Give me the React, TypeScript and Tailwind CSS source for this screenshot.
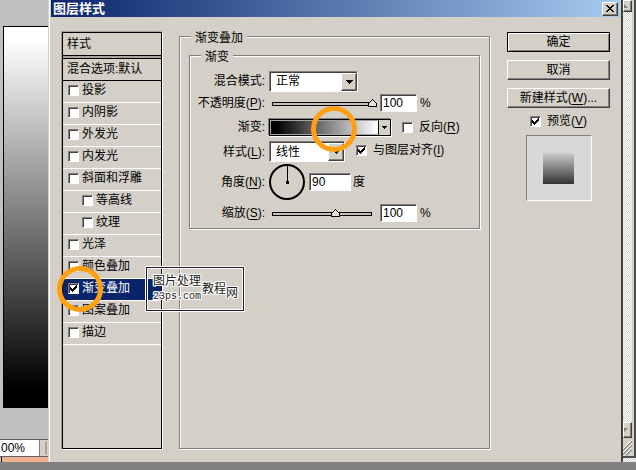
import { useState, type ReactNode } from "react";

const sunken =
  "border border-t-[#808080] border-l-[#808080] border-r-white border-b-white shadow-[inset_1px_1px_0_#404040]";
const raised =
  "border border-t-white border-l-white border-r-[#404040] border-b-[#404040] shadow-[inset_-1px_-1px_0_#808080]";
const etched = "border border-[#808080] shadow-[1px_1px_0_#fff,inset_1px_1px_0_#fff]";

function Key({ children }: { children: string }) {
  return (
    <>
      (<u className="underline-offset-2">{children}</u>)
    </>
  );
}

function Tick({ id, checked = false }: { id: string; checked?: boolean }) {
  return (
    <span className="relative block size-[11px] shrink-0">
      <input
        id={id}
        type="checkbox"
        defaultChecked={checked}
        className={`peer block size-[11px] appearance-none bg-white ${sunken}`}
      />
      <svg
        viewBox="0 0 11 11"
        className="pointer-events-none absolute inset-0 hidden size-[11px] peer-checked:block"
        shapeRendering="crispEdges"
      >
        <path d="M2 4h1v1h1v1h1v-1h1v-1h1v-1h1v-1h1v3h-1v1h-1v1h-1v1h-1v1h-1v-1h-1v-1h-1z" fill="#000" />
      </svg>
    </span>
  );
}

function DropDown({ id, value, options, width }: { id: string; value: string; options: string[]; width: string }) {
  return (
    <span className={`relative block h-[21px] ${width}`}>
      <select
        id={id}
        defaultValue={value}
        className={`block h-full w-full appearance-none bg-white pl-[6px] leading-4 ${sunken}`}
      >
        {options.map((o) => (
          <option key={o}>{o}</option>
        ))}
      </select>
      <span
        className={`pointer-events-none absolute top-[2px] right-[1px] bottom-[1px] flex w-4 items-center justify-center bg-[#d4d0c8] ${raised}`}
      >
        <svg viewBox="0 0 7 4" className="h-1 w-[7px]" shapeRendering="crispEdges">
          <path d="M0 0h7v1h-1v1h-1v1h-1v1h-1v-1h-1v-1h-1v-1h-1z" />
        </svg>
      </span>
    </span>
  );
}

function Percent({ id, label, initial, max }: { id: string; label: string; initial: number; max: number }) {
  const [value, setValue] = useState(initial);
  const x = Math.round((Math.min(value, max) / max) * 100);
  return (
    <>
      <span className="relative block h-3 w-[111px]">
        <svg viewBox="0 0 111 12" className="block h-3 w-[111px]" shapeRendering="crispEdges">
          <rect x="3" y="5" width="100" height="4" fill="#000" />
          <rect x="4" y="6" width="98" height="2" fill="#c4c0b8" />
          <g transform={`translate(${x - 1} 0)`}>
            <path d="M0 10v-4h1v-1h1v-1h1v-1h1v-1h1v1h1v1h1v1h1v1h1v4z" fill="#000" />
            <path d="M1 9v-3h1v-1h1v-1h1v-1h1v1h1v1h1v1h1v3z" fill="#e4e0d8" />
          </g>
        </svg>
        <input
          type="range"
          aria-label={label}
          min={0}
          max={max}
          value={value}
          onChange={(e) => setValue(Number(e.target.value))}
          className="absolute inset-0 w-full opacity-0"
        />
      </span>
      <input
        id={id}
        value={value}
        onChange={(e) => setValue(Number(e.target.value) || 0)}
        className={`h-[18px] w-[37px] bg-white pl-[2px] ${sunken}`}
      />
      <span className="ml-[3px]">%</span>
    </>
  );
}

function Row({ id, label, height, children }: { id: string; label: ReactNode; height: string; children: ReactNode }) {
  return (
    <div className={`flex items-center ${height}`}>
      <label htmlFor={id} className="mr-1 w-[75px] shrink-0 text-right">
        {label}:
      </label>
      {children}
    </div>
  );
}

function Ring({ place }: { place: string }) {
  return (
    <span className={`pointer-events-none absolute z-10 size-[46px] rounded-full border-[5px] border-[#ffa012] ${place}`} />
  );
}

const effects = [
  { name: "投影" },
  { name: "内阴影" },
  { name: "外发光" },
  { name: "内发光" },
  { name: "斜面和浮雕" },
  { name: "等高线", nested: true },
  { name: "纹理", nested: true },
  { name: "光泽" },
  { name: "颜色叠加" },
  { name: "渐变叠加", active: true },
  { name: "图案叠加" },
  { name: "描边" },
];

function EffectList() {
  return (
    <section className="w-[100px] shrink-0 border border-black shadow-[1px_1px_0_#fff,-1px_-1px_0_#a09c94]">
      <h2 className="h-[23px] border-b border-black pl-1 leading-[23px]">样式</h2>
      <div className="h-[2px] bg-[#a8a49c]" />
      <h2 className="h-[23px] border-y border-black pl-1 leading-[21px]">混合选项:默认</h2>
      <ul>
        {effects.map((e, i) => (
          <li
            key={e.name}
            className={`relative flex h-[22px] items-center gap-[3px] border-b border-white pb-[3px] ${e.nested ? "pl-[19px]" : "pl-[5px]"} ${
              e.active ? "bg-[#0a246a] text-white" : ""
            }`}
          >
            <Tick id={`fx-${i}`} checked={e.active} />
            <label htmlFor={`fx-${i}`}>{e.name}</label>
            {e.active && <Ring place="-left-[6px] -top-[13px]" />}
          </li>
        ))}
      </ul>
    </section>
  );
}

function GradientPanel() {
  return (
    <fieldset className={`min-w-0 flex-1 px-[9px] ${etched}`}>
      <legend className="ml-[2px] h-2 bg-[#d4d0c8] px-1 leading-[12px]">渐变叠加</legend>
      <fieldset className={`mt-[11px] pb-[2px] ${etched}`}>
        <legend className="ml-[11px] h-2 bg-[#d4d0c8] px-1 leading-[12px]">渐变</legend>
        <div className="pt-[11px]">
          <Row id="mode" label="混合模式" height="h-[22px]">
            <DropDown id="mode" value="正常" options={["正常", "溶解"]} width="w-[89px]" />
          </Row>
          <Row id="opacity" label={<>不透明度<Key>P</Key></>} height="h-[22px]">
            <Percent id="opacity" label="不透明度" initial={100} max={100} />
          </Row>
          <Row id="gradient" label="渐变" height="h-[26px]">
            <span className="relative block">
              <button
                id="gradient"
                className="flex h-[17px] w-[122px] border border-black shadow-[-1px_-1px_0_#808080,1px_1px_0_#fff]"
              >
                <span className="h-full flex-1 border border-[#a8a49c] border-r-black bg-linear-to-r/srgb from-black from-5% to-white" />
                <span className="flex h-full w-[11px] items-center justify-center bg-[#d4d0c8]">
                  <svg viewBox="0 0 5 3" className="h-[3px] w-[5px]" shapeRendering="crispEdges">
                    <path d="M0 0h5v1h-1v1h-1v1h-1v-1h-1v-1h-1z" />
                  </svg>
                </span>
              </button>
              <Ring place="left-[42px] -top-[13px]" />
            </span>
            <span className="ml-[11px] flex items-center gap-[6px]">
              <Tick id="reverse" />
              <label htmlFor="reverse">反向<Key>R</Key></label>
            </span>
          </Row>
          <Row id="style" label={<>样式<Key>L</Key></>} height="h-[23px]">
            <DropDown id="style" value="线性" options={["线性", "径向"]} width="w-[76px]" />
            <span className="ml-[11px] flex items-center gap-[6px] pb-[3px]">
              <Tick id="align" checked />
              <label htmlFor="align">与图层对齐<Key>I</Key></label>
            </span>
          </Row>
          <Row id="angle" label={<>角度<Key>N</Key></>} height="h-[37px]">
            <svg viewBox="0 0 36 36" className="size-9">
              <circle cx="18" cy="18" r="17" fill="none" stroke="#000" strokeWidth="2" />
              <path d="M18 1h1v16h1v3h-3v-3h1z" />
            </svg>
            <input id="angle" defaultValue="90" className={`ml-1 h-[18px] w-[42px] bg-white pl-[2px] ${sunken}`} />
            <span className="ml-[2px]">度</span>
          </Row>
          <Row id="scale" label={<>缩放<Key>S</Key></>} height="h-[26px]">
            <Percent id="scale" label="缩放" initial={100} max={160} />
          </Row>
        </div>
      </fieldset>
    </fieldset>
  );
}

function Actions() {
  return (
    <aside className="flex w-[103px] shrink-0 flex-col gap-2">
      <button className="h-5 border border-black shadow-[inset_1px_1px_0_#fff,inset_-1px_-1px_0_#808080]">确定</button>
      <button className={`h-5 ${raised}`}>取消</button>
      <button className={`h-5 ${raised}`}>新建样式<Key>W</Key>...</button>
      <span className="-mt-px flex h-3 items-center justify-center gap-[6px]">
        <Tick id="preview" checked />
        <label htmlFor="preview">预览<Key>V</Key></label>
      </span>
      <div className="mx-auto flex size-[66px] items-center justify-center border border-t-[#808080] border-l-[#808080] border-r-white border-b-white bg-[#d8d8d8]">
        <div className="size-[31px] bg-linear-to-b/srgb from-[#cccccc] to-[#333333]" />
      </div>
    </aside>
  );
}

const halo =
  "text-[#241c20] [text-shadow:1px_0_#fff,-1px_0_#fff,0_1px_#fff,0_-1px_#fff,1px_1px_#fff,-1px_-1px_#fff,1px_-1px_#fff,-1px_1px_#fff]";

function Watermark() {
  return (
    <div
      className={`absolute top-[267px] left-[97px] z-20 flex h-[44px] w-[98px] items-center gap-px border border-[#241c20] pl-[6px] shadow-[0_0_0_1px_#fff,inset_0_0_0_1px_#fff] ${halo}`}
    >
      <p className="w-12 leading-[14px]">
        图片处理
        <br />
        <span className="font-['Liberation_Mono',monospace] text-[10px]">23ps.com</span>
      </p>
      <p className="flex pt-1">
        <span>教</span>
        <span>程</span>
        <span className="mt-1">网</span>
      </p>
    </div>
  );
}

function LayerStyleDialog() {
  return (
    <main className="relative flex min-w-0 flex-1 flex-col border-r-2 border-l border-r-[#404040] border-l-[#d4d0c8] bg-[#d4d0c8] shadow-[inset_1px_0_0_#fff]">
      <header className="mr-px ml-[2px] flex h-[17px] items-center justify-between bg-linear-to-r/srgb from-[#0a246a] to-[#a6caf0] pr-[2px] pl-[2px]">
        <h1 className="text-[13px] leading-4 font-bold text-white">图层样式</h1>
        <button aria-label="关闭" className={`flex h-[14px] w-4 items-center justify-center bg-[#d4d0c8] ${raised}`}>
          <svg viewBox="0 0 8 7" className="h-[7px] w-2" shapeRendering="crispEdges">
            <path d="M0 0h2v1h1v1h2v-1h1v-1h2v1h-1v1h-1v1h-1v1h1v1h1v1h1v1h-2v-1h-1v-1h-2v1h-1v1h-2v-1h1v-1h1v-1h1v-1h-1v-1h-1v-1h-1z" />
          </svg>
        </button>
      </header>
      <div className="flex flex-1 gap-[17px] pt-[15px] pr-[11px] pb-[13px] pl-[13px]">
        <EffectList />
        <GradientPanel />
        <Actions />
      </div>
      <Watermark />
    </main>
  );
}

function CanvasEdge() {
  return (
    <div className="flex w-12 shrink-0 flex-col bg-[#c0c0c0]">
      <div className="mt-[26px] mb-[31px] ml-[3px] flex-1 border-t border-l border-black bg-linear-to-b/srgb from-white from-3% to-black to-95%" />
      <div className="flex h-[18px] border-y border-[#606060] bg-[#d4d0c8]">
        <input aria-label="缩放级别" defaultValue="00%" className="w-10 border-r border-[#808080] bg-white pl-px" />
        <span className="m-px ml-[5px] w-3 rounded-l-full border-l-2 border-[#a8a49c]" />
      </div>
      <div className="ml-px h-[5px] border-l border-black bg-[#eeb090]" />
    </div>
  );
}

const dither = "bg-[repeating-conic-gradient(#fff_0_25%,#d4d0c8_0_50%)] bg-size-[2px_2px]";

function ScrollEdge() {
  return (
    <div className={`flex w-[13px] shrink-0 flex-col ${dither}`}>
      <div className="flex flex-1 flex-col border-r-2 border-b-2 border-[#505050] bg-[#d4d0c8] pr-[2px]">
        <div className={`flex h-3 items-center bg-[#d4d0c8] ${raised}`}>
          <svg viewBox="0 0 4 4" className="size-1">
            <path d="M0 0l4 4H0z" fill="#808080" />
          </svg>
        </div>
        <div className={`flex-1 ${dither}`} />
        <div className={`flex h-4 items-center bg-[#d4d0c8] ${raised}`}>
          <svg viewBox="0 0 4 4" className="size-1">
            <path d="M0 0h4L0 4z" fill="#808080" />
          </svg>
        </div>
        <svg viewBox="0 0 9 18" className="h-[18px] w-[9px]">
          <path d="M0 12L9 3M0 16L9 7M3 17L9 11" stroke="#808080" strokeWidth="1.5" />
          <path d="M0 11L9 2M0 15L9 6M2 17L9 10" stroke="#fff" />
        </svg>
      </div>
      <div className="h-[4px]" />
    </div>
  );
}

export default function App() {
  return (
    <div className="flex min-h-screen flex-col overflow-hidden border-b-8 border-[#808080] font-['Liberation_Sans','Noto_Sans_CJK_SC',sans-serif] text-[12px] leading-4 text-black">
      <div className="flex flex-1">
        <CanvasEdge />
        <LayerStyleDialog />
        <ScrollEdge />
      </div>
    </div>
  );
}
